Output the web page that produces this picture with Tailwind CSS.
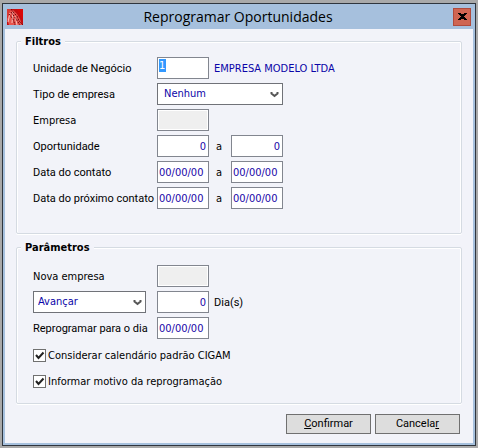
<!DOCTYPE html>
<html lang="pt-BR">
  <head>
    <meta charset="UTF-8" />
    <meta name="viewport" content="width=device-width, initial-scale=1.0" />
    <title>Reprogramar Oportunidades</title>
    <script src="https://cdn.jsdelivr.net/npm/@tailwindcss/browser@4"></script>
  </head>
  <body class="flex min-h-screen bg-[#a9a9a9] px-[2px] pt-[3px] pb-[2px] font-[family-name:DejaVu_Sans_Condensed,sans-serif] text-[11px] text-black">
    <div class="flex w-full flex-col border border-[#2f353d] bg-[#a6c0dd]">
      <!-- Title bar -->
      <header class="flex h-[25px] items-center pr-1 pl-1">
        <svg class="size-4" viewBox="0 0 16 16">
          <rect width="16" height="16" fill="#c40c10" />
          <path d="M0 0h5L2 5 0 9z" fill="#d93a35" />
          <path d="M10 0h6v11l-3-5z" fill="#d90808" />
          <path d="M0 10 3 2 6 1l4 4 3 5 2 6H2z" fill="#e8554f" />
          <path d="M3 4 1 13M6 3 5 14M8 7l2 9" stroke="#f9c0b8" />
          <path d="M4 0l3 4 3 3 2 5 4 4M2 5l4 5 2 6M4 3l5 7 4 6" fill="none" stroke="#70060b" stroke-dasharray="2 1" />
        </svg>
        <h1 class="flex-1 text-center font-[family-name:Open_Sans,sans-serif] text-[14px] leading-5">Reprogramar Oportunidades</h1>
        <button type="button" aria-label="Fechar" class="flex h-[18px] w-[18px] items-center justify-center border border-[#b04a3c] bg-[#cf6552]">
          <svg class="h-[7px] w-[9px]" viewBox="0 0 9 7" shape-rendering="crispEdges">
            <path d="M0 0h3v1h3V0h3v1H8v1H7v1H6v1h1v1h1v1h1v1H6V6H3v1H0V6h1V5h1V4h1V3H2V2H1V1H0z" />
          </svg>
        </button>
      </header>

      <form class="mx-[2px] mb-[2px] flex-1 bg-[#f2f3f9] px-[11px] pt-1 pb-2">
        <!-- Filtros -->
        <fieldset class="rounded-xs border border-[#d5dbe2] px-4 pt-2 pb-6 shadow-[inset_0_1px_#fff,inset_1px_0_#fff,inset_-1px_0_#fff,0_1px_#fff]">
          <legend class="-ml-3 bg-[#f2f3f9] px-1 pt-px leading-[15px] font-bold">Filtros</legend>
          <div class="grid grid-cols-[124px_52px_22px_52px_1fr] items-center gap-y-1 [&_label]:pt-[2px]">
            <label for="unidade" class="font-[family-name:Roboto,sans-serif]">Unidade de Negócio</label>
            <div class="flex h-[22px] w-[52px] border border-[#82868f] bg-white p-px">
              <input id="unidade" value="1" class="h-[13px] w-[7px] bg-[#3399ff] leading-3 text-white outline-none" />
            </div>
            <output for="unidade" class="col-span-3 pt-[2px] pl-[5px] text-[#0b05a8]">EMPRESA MODELO LTDA</output>

            <label for="tipo" class="font-[family-name:Roboto,sans-serif]">Tipo de empresa</label>
            <div class="relative col-span-3">
              <select id="tipo" class="h-[22px] w-full appearance-none border border-[#707278] bg-white pl-[6px] text-[#0b05a8]">
                <option>Nenhum</option>
              </select>
              <svg class="pointer-events-none absolute top-2 right-1 h-[7px] w-[9px]" viewBox="0 0 9 7" fill="none" stroke="#555" stroke-width="2">
                <path d="M1.500 1v1.500l3 2.500L7.500 2.500V1" />
              </svg>
            </div>
            <span></span>

            <label for="empresa">Empresa</label>
            <input id="empresa" disabled class="h-[22px] w-full border border-[#82868f] bg-[#efefef] shadow-[inset_0_0_0_1px_#fff]" />
            <span class="col-span-3"></span>

            <label for="oport-de" class="font-[family-name:Roboto,sans-serif]">Oportunidade</label>
            <input id="oport-de" value="0" class="h-[22px] w-full border border-[#82868f] bg-white pr-[2px] text-right text-[#1a05a8]" />
            <label for="oport-ate" class="pr-[2px] text-center">a</label>
            <input id="oport-ate" value="0" class="h-[22px] w-full border border-[#82868f] bg-white pr-[2px] text-right text-[#1a05a8]" />
            <span></span>

            <label for="contato-de" class="font-[family-name:Roboto,sans-serif]">Data do contato</label>
            <input id="contato-de" value="00/00/00" class="h-[22px] w-full border border-[#82868f] bg-white pl-px text-[#1a05a8]" />
            <label for="contato-ate" class="pr-[2px] text-center">a</label>
            <input id="contato-ate" value="00/00/00" class="h-[22px] w-full border border-[#82868f] bg-white pl-px text-[#1a05a8]" />
            <span></span>

            <label for="proximo-de" class="font-[family-name:Roboto,sans-serif]">Data do próximo contato</label>
            <input id="proximo-de" value="00/00/00" class="h-[22px] w-full border border-[#82868f] bg-white pl-px text-[#1a05a8]" />
            <label for="proximo-ate" class="pr-[2px] text-center">a</label>
            <input id="proximo-ate" value="00/00/00" class="h-[22px] w-full border border-[#82868f] bg-white pl-px text-[#1a05a8]" />
            <span></span>
          </div>
        </fieldset>

        <!-- Parâmetros -->
        <fieldset class="mt-[5px] rounded-xs border border-[#d5dbe2] px-4 pt-[10px] pb-[15px] shadow-[inset_0_1px_#fff,inset_1px_0_#fff,inset_-1px_0_#fff,0_1px_#fff]">
          <legend class="-ml-3 bg-[#f2f3f9] px-1 pt-px leading-[15px] font-bold">Parâmetros</legend>
          <div class="grid grid-cols-[124px_52px_1fr] items-center gap-y-1 [&_label]:pt-[2px]">
            <label for="nova">Nova empresa</label>
            <input id="nova" disabled class="h-[22px] w-full border border-[#82868f] bg-[#efefef] shadow-[inset_0_0_0_1px_#fff]" />
            <span></span>

            <div class="relative mr-[11px]">
              <select aria-label="Sentido" class="h-[22px] w-full appearance-none border border-[#707278] bg-white pl-1 text-[#0b05a8]">
                <option>Avançar</option>
              </select>
              <svg class="pointer-events-none absolute top-2 right-1 h-[7px] w-[9px]" viewBox="0 0 9 7" fill="none" stroke="#555" stroke-width="2">
                <path d="M1.500 1v1.500l3 2.500L7.500 2.500V1" />
              </svg>
            </div>
            <input id="dias" value="0" class="h-[22px] w-full border border-[#82868f] bg-white pr-[2px] text-right text-[#1a05a8]" />
            <label for="dias" class="pl-[5px] font-[family-name:Roboto,sans-serif]">Dia(s)</label>

            <label for="dia" class="font-[family-name:Roboto,sans-serif]">Reprogramar para o dia</label>
            <input id="dia" value="00/00/00" class="h-[22px] w-full border border-[#82868f] bg-white pl-px text-[#1a05a8]" />
            <span></span>
          </div>

          <div class="mt-[10px] flex flex-col gap-[13px] leading-[13px]">
            <label class="flex items-center gap-[2px]">
              <span class="relative size-[13px]">
                <input type="checkbox" checked class="peer block size-[13px] appearance-none border border-[#707070] bg-white" />
                <svg class="pointer-events-none absolute inset-0 hidden size-[13px] peer-checked:block" viewBox="0 0 13 13" fill="none" stroke="#222" stroke-width="2">
                  <path d="M3 6l2.500 3L10.500 3.500" />
                </svg>
              </span>
              Considerar calendário padrão CIGAM
            </label>
            <label class="flex items-center gap-[2px]">
              <span class="relative size-[13px]">
                <input type="checkbox" checked class="peer block size-[13px] appearance-none border border-[#707070] bg-white" />
                <svg class="pointer-events-none absolute inset-0 hidden size-[13px] peer-checked:block" viewBox="0 0 13 13" fill="none" stroke="#222" stroke-width="2">
                  <path d="M3 6l2.500 3L10.500 3.500" />
                </svg>
              </span>
              Informar motivo da reprogramação
            </label>
          </div>
        </fieldset>

        <div class="mt-[10px] flex justify-end gap-1 pr-[2px] font-[family-name:Roboto,sans-serif]">
          <button type="submit" class="h-5 w-[85px] border border-[#707070] bg-[#dddddd]"><u>C</u>onfirmar</button>
          <button type="button" class="h-5 w-[85px] border border-[#707070] bg-[#dddddd]">Cancela<u>r</u></button>
        </div>
      </form>
    </div>
  </body>
</html>
